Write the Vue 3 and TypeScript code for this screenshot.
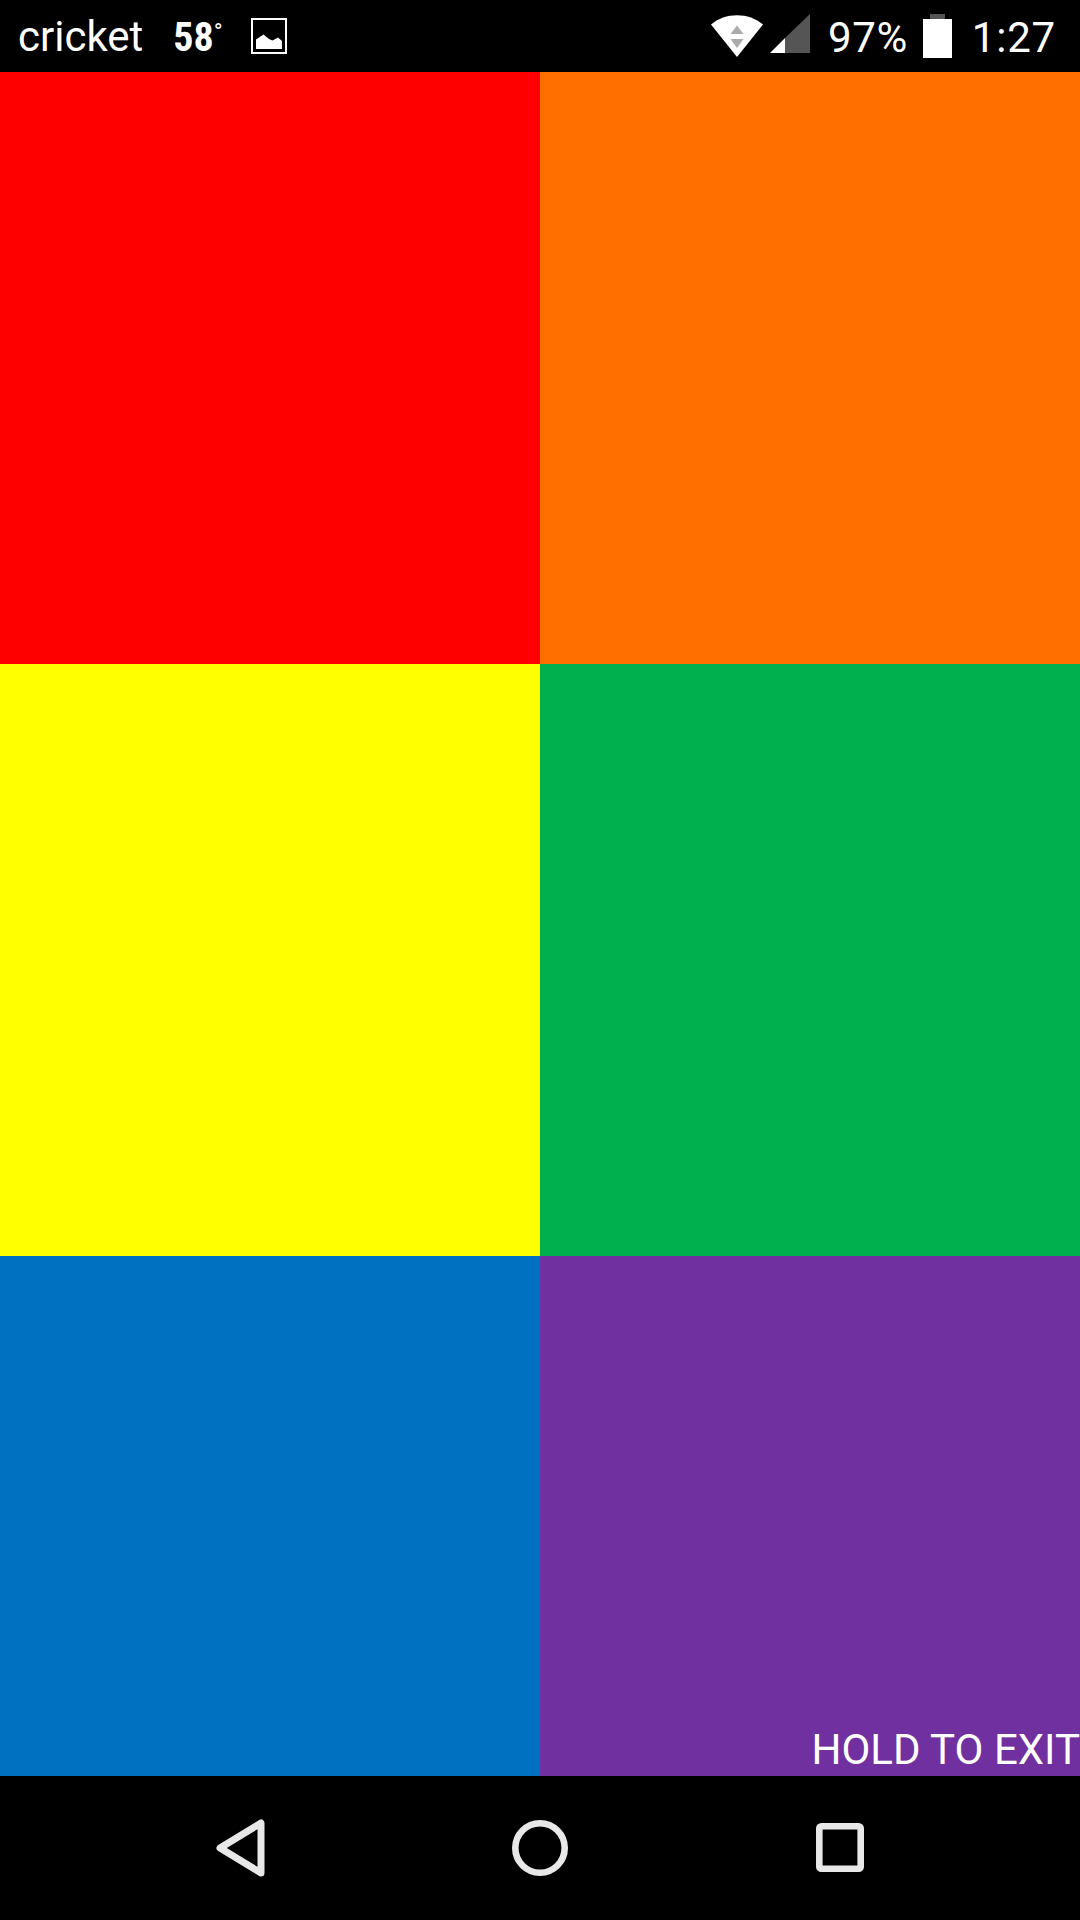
<script setup lang="ts">
const cells: { id: string; color: string }[] = [
  { id: 'red', color: '#ff0000' },
  { id: 'orange', color: '#ff6f00' },
  { id: 'yellow', color: '#ffff00' },
  { id: 'green', color: '#00b04f' },
  { id: 'blue', color: '#0070c0' },
  { id: 'purple', color: '#7030a0' },
]
</script>

<template>
  <div class="screen">
    <header class="status">
      <div class="left">
        <span class="carrier">cricket</span>
        <span class="temp">58<sup class="deg">°</sup></span>
        <svg class="pic" width="36" height="36" viewBox="0 0 36 36">
          <rect x="1" y="1" width="34" height="34" fill="none" stroke="#fff" stroke-width="2" />
          <path d="M5 31V21.5L12.5 16.5L18 21L21.5 22.5L27 19.5L31 23V31Z" fill="#fff" />
        </svg>
      </div>
      <div class="right">
        <svg class="wifi" width="52" height="42" viewBox="0 0 52 42">
          <path d="M0 9.5C14 -3 38 -3 52 9.5L26 42Z" fill="#fff" />
          <path d="M26 10.5L32.5 19H19.5Z" fill="#aaa" />
          <path d="M19.5 24H32.5L26 33Z" fill="#aaa" />
        </svg>
        <svg class="signal" width="40" height="39" viewBox="0 0 40 39">
          <path d="M40 0V39H15V24Z" fill="#555" />
          <path d="M0 39L15 24V39Z" fill="#fff" />
        </svg>
        <span class="pct">97%</span>
        <svg class="batt" width="29" height="44" viewBox="0 0 29 44">
          <rect x="7" y="0" width="15" height="5" fill="#555" />
          <rect x="0" y="5" width="29" height="39" fill="#fff" />
        </svg>
        <span class="time">1:27</span>
      </div>
    </header>

    <main class="grid">
      <div v-for="c in cells" :key="c.id" class="cell" :style="{ background: c.color }"></div>
      <span class="hold">HOLD TO EXIT</span>
    </main>

    <nav class="nav">
      <svg class="back" width="50" height="58" viewBox="0 0 50 58">
        <path d="M45 4V54L4 29Z" fill="none" stroke="#e8e8e8" stroke-width="7" stroke-linejoin="round" />
      </svg>
      <svg class="home" width="56" height="56" viewBox="0 0 56 56">
        <circle cx="28" cy="28" r="24.7" fill="none" stroke="#e8e8e8" stroke-width="6.6" />
      </svg>
      <svg class="recent" width="48" height="49" viewBox="0 0 48 49">
        <rect x="3.3" y="3.3" width="41.4" height="42.4" rx="2" fill="none" stroke="#e8e8e8" stroke-width="6.6" />
      </svg>
    </nav>
  </div>
</template>

<style scoped>
.screen {
  width: 1080px;
  height: 1920px;
  display: flex;
  flex-direction: column;
  background: #000;
  overflow: hidden;
  font-family: Roboto, "Liberation Sans", sans-serif;
  color: #fff;
}
.status {
  height: 72px;
  flex: none;
  display: flex;
  align-items: center;
  justify-content: space-between;
  padding: 0 24px 0 18px;
}
.left, .right { display: flex; align-items: center; }
.carrier { font-size: 42px; line-height: 72px; position: relative; top: 1px; }
.temp { font-size: 40px; font-weight: 700; font-stretch: condensed; margin-left: 30px; white-space: nowrap; position: relative; top: 1px; }
.deg { font-size: 24px; font-weight: 400; font-stretch: normal; vertical-align: baseline; position: relative; top: -11px; line-height: 0; }
.pic { margin-left: 28px; }
.wifi { margin-top: -1px; margin-right: 1px; }
.signal { margin-left: 6px; margin-top: -5px; }
.pct { font-size: 42px; letter-spacing: 0.6px; margin-left: 18px; position: relative; top: 1px; }
.batt { margin-left: 15px; }
.time { font-size: 42px; letter-spacing: 0.8px; margin-left: 20px; position: relative; top: 1px; }
.grid {
  flex: 1;
  position: relative;
  display: grid;
  grid-template-columns: 540px 540px;
  grid-template-rows: 592px 592px 520px;
}
.hold {
  position: absolute;
  right: 0;
  bottom: 2px;
  font-size: 42px;
  line-height: 48px;
  white-space: nowrap;
}
.nav {
  height: 144px;
  flex: none;
  position: relative;
}
.back { position: absolute; left: 216px; top: 43px; }
.home { position: absolute; left: 512px; top: 44px; }
.recent { position: absolute; left: 816px; top: 47px; }
</style>
